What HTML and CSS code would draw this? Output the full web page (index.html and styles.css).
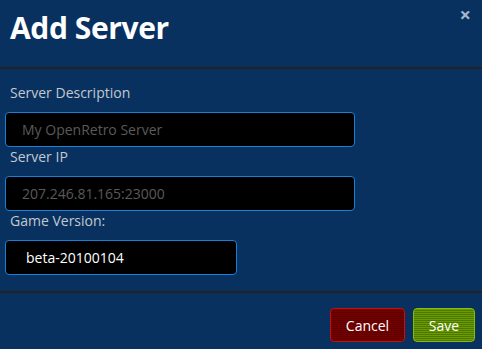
FILE: index.html
```html
<!DOCTYPE html>
<html>

<head>
    <title>Add Server</title>
    <link rel="stylesheet" href="styles.css">
</head>

<body>
    <div class="modal">
        <div class="modal-header">
            <h1>Add Server</h1>
            <span class="close">&times;</span>
        </div>

        <div class="modal-body">
            <label for="server-desc">Server Description</label>
            <input type="text" id="server-desc" class="field" placeholder="My OpenRetro Server">

            <label for="server-ip">Server IP</label>
            <input type="text" id="server-ip" class="field" placeholder="207.246.81.165:23000">

            <label for="game-version">Game Version:</label>
            <div class="field field-short" id="game-version">beta-20100104</div>
        </div>

        <div class="modal-footer">
            <button class="btn btn-cancel">Cancel</button>
            <button class="btn btn-save">Save</button>
        </div>
    </div>
</body>

</html>
```

FILE: styles.css
```css
* {
    margin: 0;
    padding: 0;
    box-sizing: border-box;
}

body {
    background: #08315f;
    font-family: "Open Sans", "Noto Sans", sans-serif;
    width: 482px;
    height: 349px;
    overflow: hidden;
}

.modal {
    display: flex;
    flex-direction: column;
    height: 349px;
}

/* header */
.modal-header {
    height: 69px;
    border-bottom: 2px solid #232323;
    display: flex;
    justify-content: space-between;
    align-items: flex-start;
    padding: 8px 10px 0 10px;
}

.modal-header h1 {
    color: #fff;
    font-size: 30px;
    font-weight: 700;
    line-height: 40px;
    letter-spacing: -0.4px;
}

.close {
    color: #a9b6c9;
    font-size: 20px;
    font-weight: 700;
    line-height: 16px;
    margin-top: -1px;
    margin-right: 1px;
}

/* body */
.modal-body {
    display: flex;
    flex-direction: column;
    align-items: flex-start;
    padding: 14px 5px 16px 5px;
    border-bottom: 2px solid #232323;
}

.modal-body label {
    display: block;
    color: #c3c8d0;
    font-size: 14px;
    line-height: 20px;
    padding-left: 5px;
    margin-bottom: 9px;
}

.field {
    width: 350px;
    height: 35px;
    background: #000;
    border: 1px solid #1a7fd6;
    border-radius: 4px;
    padding: 0 16px;
    font-family: inherit;
    font-size: 14px;
    color: #fff;
    outline: none;
}

.field::placeholder {
    color: #5a5a5a;
}

.field-short {
    width: 232px;
    padding-left: 20px;
    line-height: 33px;
}

/* footer */
.modal-footer {
    display: flex;
    justify-content: flex-end;
    gap: 8px;
    padding: 15px 7px 0 0;
}

.btn {
    height: 34px;
    border-radius: 4px;
    color: #fff;
    font-family: inherit;
    font-size: 14px;
    cursor: pointer;
}

.btn-cancel {
    width: 75px;
    border: 1px solid #d10a0a;
    background: repeating-linear-gradient(#760000 0, #760000 1px, #5c0000 1px, #5c0000 2px);
}

.btn-save {
    width: 62px;
    border: 1px solid #86c000;
    background: repeating-linear-gradient(#6a9c00 0, #6a9c00 1px, #4c7600 1px, #4c7600 2px);
}
```
